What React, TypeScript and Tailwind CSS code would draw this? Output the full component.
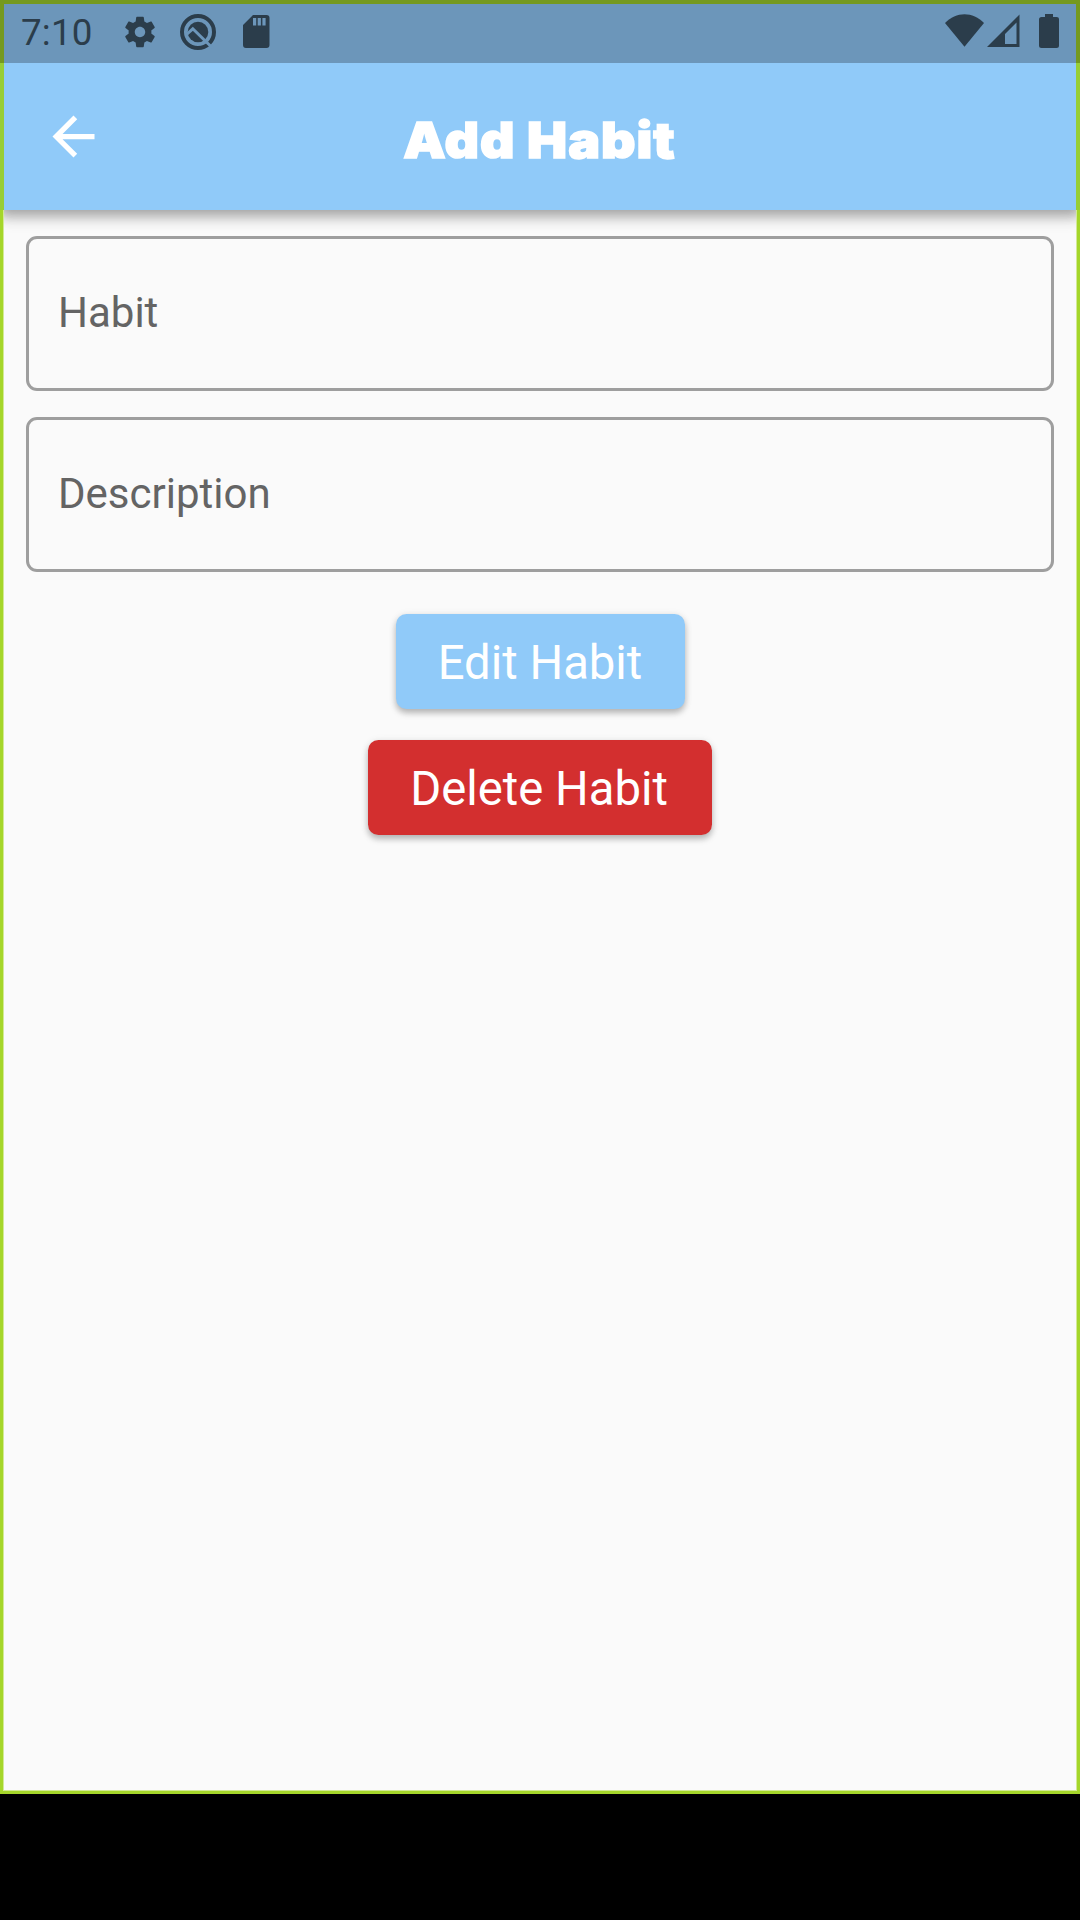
import React from "react";

function StatusBar() {
  return (
    <div className="relative z-20 flex h-[63px] items-center bg-[#6c96ba] pl-[21px] pr-[21px] text-[#2b3d4b]">
      <span className="w-[100px] pt-1 text-[36.75px] leading-none tracking-[0.2px]">7:10</span>
      <svg className="h-[38px] w-[38px]" viewBox="0 0 24 24" fill="currentColor">
        <path d="M19.14 12.94c.04-.3.06-.61.06-.94 0-.32-.02-.64-.07-.94l2.03-1.58c.18-.14.23-.41.12-.61l-1.92-3.32c-.12-.22-.37-.29-.59-.22l-2.39.96c-.5-.38-1.03-.7-1.62-.94l-.36-2.54c-.04-.24-.24-.41-.48-.41h-3.84c-.24 0-.43.17-.47.41l-.36 2.54c-.59.24-1.13.57-1.62.94l-2.39-.96c-.22-.08-.47 0-.59.22L2.74 8.87c-.12.21-.08.47.12.61l2.03 1.58c-.05.3-.09.63-.09.94s.02.64.07.94l-2.03 1.58c-.18.14-.23.41-.12.61l1.92 3.32c.12.22.37.29.59.22l2.39-.96c.5.38 1.03.7 1.62.94l.36 2.54c.05.24.24.41.48.41h3.84c.24 0 .44-.17.47-.41l.36-2.54c.59-.24 1.13-.56 1.62-.94l2.39.96c.22.08.47 0 .59-.22l1.92-3.32c.12-.22.07-.47-.12-.61l-2.01-1.58zM12 15.3c-1.8 0-3.3-1.5-3.3-3.3s1.5-3.3 3.3-3.3 3.3 1.5 3.3 3.3-1.5 3.3-3.3 3.3z" />
      </svg>
      <svg className="ml-[20px] h-[38px] w-[38px]" viewBox="0 0 38 38">
        <circle cx="19" cy="19" r="16" stroke="currentColor" strokeWidth="4" fill="none" />
        <circle cx="19" cy="19" r="10.300" fill="currentColor" />
        <path d="M7.500 21.500L13.800 15.800L33.500 35" stroke="#6c96ba" strokeWidth="3" fill="none" />
      </svg>
      <svg className="ml-[26px] h-[33px] w-[27px]" viewBox="0 0 27 33">
        <path d="M10 0H23.500a3 3 0 0 1 3 3V30a3 3 0 0 1-3 3H3a3 3 0 0 1-3-3V10Z" fill="currentColor" />
        <path d="M10 3h3.200v7.500h-3.200zM14.700 3h3.200v7.500h-3.200zM19.400 3h3.200v7.500h-3.200z" fill="#6c96ba" />
      </svg>
      <svg className="-mt-px ml-auto h-[34px] w-[114px]" viewBox="0 0 114 34" fill="currentColor">
        <path d="M0 9C11-2.700 28-2.700 39 9L19.500 32.700Z" />
        <path fillRule="evenodd" d="M42 33L74.500 .500V33ZM60 30H71.500V8.500L60 20Z" />
        <path d="M100 0h8v3h3.500a2.500 2.500 0 0 1 2.500 2.500V31.500a2.500 2.500 0 0 1-2.500 2.500H96.500a2.500 2.500 0 0 1-2.500-2.500V5.500A2.500 2.500 0 0 1 96.500 3H100Z" />
      </svg>
    </div>
  );
}

function AppBar() {
  return (
    <header className="relative z-10 flex h-[147px] items-center bg-[#90caf9] px-[42px] shadow-[0_5px_10px_rgba(0,0,0,0.2),0_10px_13px_rgba(0,0,0,0.13),0_2px_20px_rgba(0,0,0,0.08)]">
      <button aria-label="Back" className="w-[63px]">
        <svg className="h-[63px] w-[63px]" viewBox="0 0 24 24" fill="white">
          <path d="M20 11H7.830l5.590-5.590L12 4l-8 8 8 8 1.410-1.410L7.830 13H20v-2z" />
        </svg>
      </button>
      <h1 className="mr-[63px] flex-1 scale-x-[1.08] pr-[1px] pt-[8px] text-center font-[Inter] text-[49.500px] font-black leading-none tracking-[0.900px] text-white [-webkit-text-stroke:1.500px_white]">
        Add Habit
      </h1>
    </header>
  );
}

function Field({ label }: { label: string }) {
  return (
    <div className="flex h-[155px] items-center rounded-[11px] border-[3px] border-[#9e9e9e] pb-[2px] pl-[29px] text-[42px] leading-none text-[#646464]">
      {label}
    </div>
  );
}

export default function App() {
  return (
    <div className="h-[1920px] w-[1080px] overflow-hidden bg-black font-[Roboto]">
      <div className="relative h-[1794px] overflow-hidden bg-[#fafafa]">
        <StatusBar />
        <AppBar />
        <main className="flex flex-col items-center px-[26px] pt-[26px]">
          <div className="flex w-full flex-col gap-[26px]">
            <Field label="Habit" />
            <Field label="Description" />
          </div>
          <button className="mt-[42px] h-[95px] w-[289px] rounded-[10.500px] bg-[#90caf9] pt-[4px] text-[47.250px] leading-none text-white shadow-[0_4px_6px_rgba(0,0,0,0.25),0_1px_8px_rgba(0,0,0,0.08)]">
            Edit Habit
          </button>
          <button className="mt-[31px] h-[95px] w-[344px] rounded-[10.500px] bg-[#d32f2f] pr-[2px] pt-[4px] text-[47.250px] leading-none text-white shadow-[0_4px_6px_rgba(0,0,0,0.25),0_1px_8px_rgba(0,0,0,0.08)]">
            Delete Habit
          </button>
        </main>
        <div className="pointer-events-none absolute inset-0 z-20 border-4 border-[#d3ea95]" />
        <div className="pointer-events-none absolute inset-0 z-20 border-[3px] border-[#a5d62a]" />
        <div className="pointer-events-none absolute inset-x-0 top-0 z-20 h-[63px] border-x-4 border-t-4 border-[#75991f]" />
        <div className="pointer-events-none absolute inset-x-0 top-[63px] z-20 h-[147px] border-x-4 border-[#98ce36]" />
      </div>
    </div>
  );
}
